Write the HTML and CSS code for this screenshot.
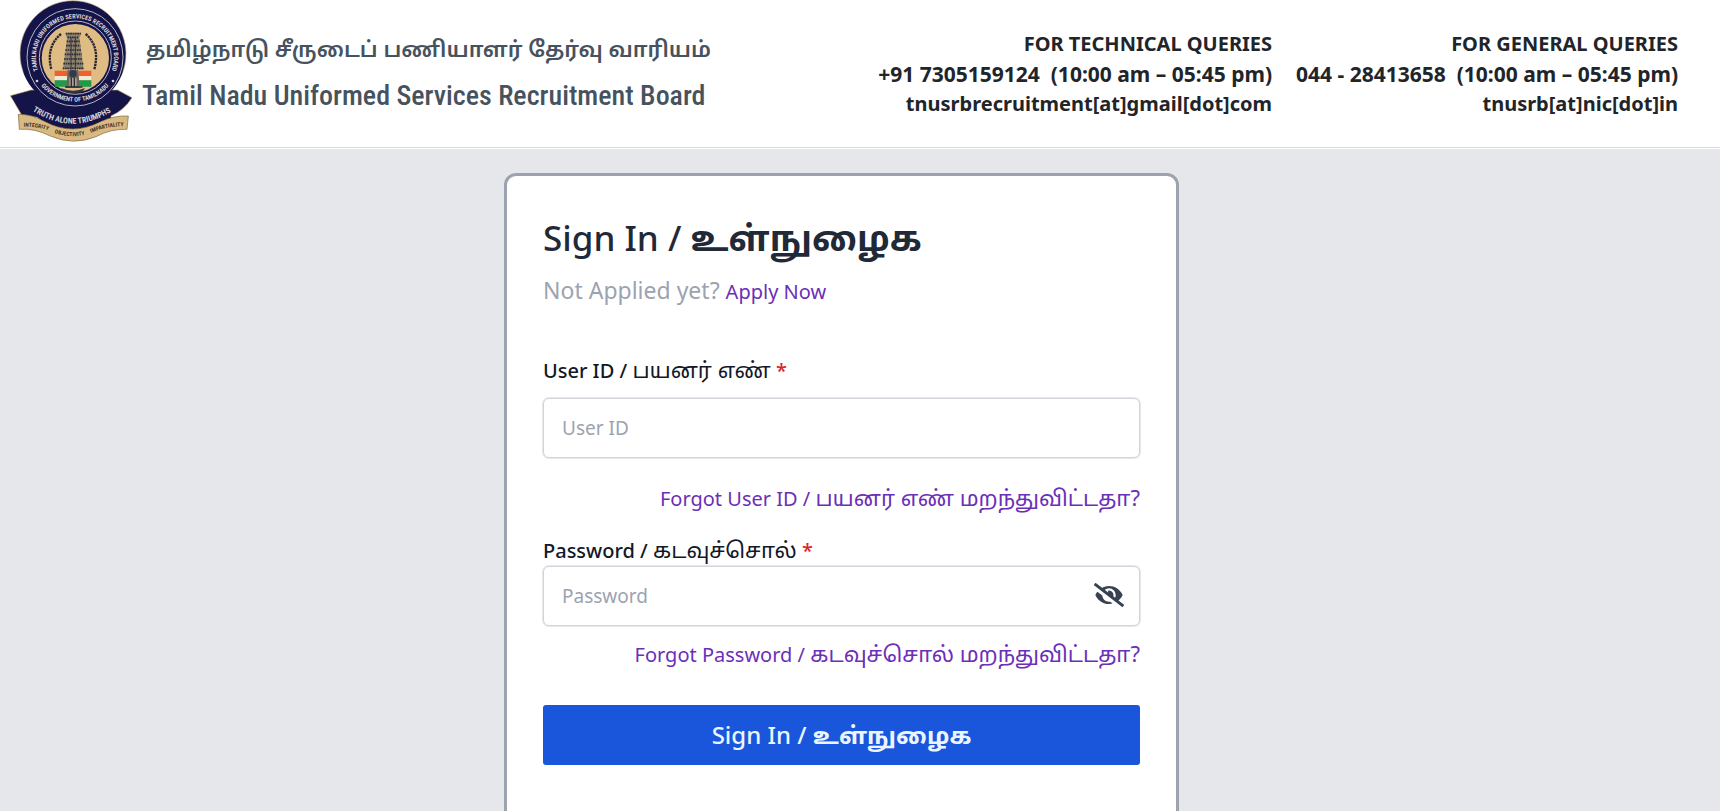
FILE: index.html
```html
<!DOCTYPE html>
<html lang="en">
<head>
  <meta charset="UTF-8" />
  <meta name="viewport" content="width=device-width, initial-scale=1.0"/>
  <title>Sign In | TNUSRB</title>
  <link rel="stylesheet" href="styles.css">
</head>
<body>
  <header>
    <div class="brand">
      <svg class="logo" viewBox="27 0 366 429" role="img" aria-label="TNUSRB emblem">
        <defs>
          <path id="ringTop" d="M222 289 A117 117 0 0 1 222 55 A117 117 0 0 1 222 289"/>
          <path id="ringBottom" d="M222 39 A133 133 0 0 0 222 305 A133 133 0 0 0 222 39"/>
          <path id="ribbonText" d="M60 306 Q212 434 366 310"/>
          <path id="scrollText" d="M56 381 Q110 376 160 399 Q217 418 270 399 Q320 376 380 379"/>
        </defs>
        <!-- dark ribbon -->
        <path d="M28 287 L90 270 L350 270 L393 293 Q370 330 330 348 L330 362 Q215 440 108 352 L62 345 Z" fill="#141449" stroke="#c9a764" stroke-width="2"/>
        <!-- scroll -->
        <path d="M52 343 Q90 342 130 364 Q215 410 300 364 Q340 346 382 348 L378 388 Q330 386 285 410 Q215 438 148 408 Q100 384 55 388 Z" fill="#d8b982" stroke="#7b653f" stroke-width="2"/>
        <path d="M106 330 L330 330 L316 356 Q215 408 118 356 Z" fill="#141449"/>
        <!-- seal -->
        <ellipse cx="216" cy="162" rx="159" ry="160" fill="#141449"/>
        <path d="M66 215 A159 160 0 1 1 366 215" fill="none" stroke="#c7b184" stroke-width="2"/>
        <ellipse cx="222" cy="172" rx="144" ry="146" fill="none" stroke="#b9b6c6" stroke-width="3"/>
        <ellipse cx="223" cy="173" rx="108" ry="110" fill="none" stroke="#b9b6c6" stroke-width="3"/>
        <ellipse cx="223" cy="174" rx="101" ry="102" fill="#dfbc83"/>
        <!-- wreaths -->
        <path d="M180 102 Q134 140 151 208" fill="none" stroke="#2b2532" stroke-width="7" stroke-dasharray="7 2"/>
        <path d="M254 102 Q298 140 280 208" fill="none" stroke="#2b2532" stroke-width="7" stroke-dasharray="7 2"/>
        <!-- temple tower -->
        <path d="M195 98h43v12h-3l13 98h-62l13-98h-4z" fill="#8d826b"/>
        <path d="M194 101h46M199 112h35M197 124h39M195 137h43M193 150h47M191 163h51M189 177h55M187 191h60M185 205h64" stroke="#2d2b36" stroke-width="5" stroke-dasharray="5 2"/>
        <path d="M210 112v100M223 112v100" stroke="#343142" stroke-width="3"/>
        <!-- flags -->
        <path d="M161 212h41v18h-41zM232 212h39v18h-39z" fill="#f0602e"/>
        <path d="M161 228h41v13h-41zM232 228h39v13h-39z" fill="#f2e8d7"/>
        <path d="M161 241h41v19h-41zM232 241h39v19h-39z" fill="#1f9a4b"/>
        <!-- lion capital -->
        <path d="M200 210h32l4 54h-40z" fill="#6b655e"/>
        <circle cx="216" cy="221" r="11" fill="#33384a"/>
        <path d="M205 234h22v24h-22z" fill="#aaa28a"/>
        <path d="M211 233v30M220 233v30M192 261h52" stroke="#272b3d" stroke-width="4"/>
        <path d="M180 264q36 16 72 0l-7 11q-29 10-58 0z" fill="#343243"/>
        <circle cx="108" cy="243" r="4" fill="#d5d2d5"/>
        <circle cx="336" cy="243" r="4" fill="#d5d2d5"/>
        <text class="seal-text"><textPath href="#ringTop" startOffset="50%">TAMILNADU UNIFORMED SERVICES RECRUITMENT BOARD</textPath></text>
        <text class="seal-text"><textPath href="#ringBottom" startOffset="50%">GOVERNMENT OF TAMILNADU</textPath></text>
        <text class="seal-text ribbon-text"><textPath href="#ribbonText" startOffset="50%">TRUTH ALONE TRIUMPHS</textPath></text>
        <text class="seal-text scroll-text"><textPath href="#scrollText" startOffset="50%">INTEGRITY &#160; &#160; OBJECTIVITY &#160; &#160; IMPARTIALITY</textPath></text>
      </svg>
      <div class="brand-name">
        <p class="brand-ta" lang="ta">தமிழ்நாடு சீருடைப் பணியாளர் தேர்வு வாரியம்</p>
        <p class="brand-en">Tamil Nadu Uniformed Services Recruitment Board</p>
      </div>
    </div>
    <div class="contacts">
      <div class="contact">
        <p>FOR TECHNICAL QUERIES</p>
        <p class="phone">+91 7305159124&nbsp; (10:00 am – 05:45 pm)</p>
        <p>tnusrbrecruitment[at]gmail[dot]com</p>
      </div>
      <div class="contact">
        <p>FOR GENERAL QUERIES</p>
        <p class="phone">044 - 28413658&nbsp; (10:00 am – 05:45 pm)</p>
        <p>tnusrb[at]nic[dot]in</p>
      </div>
    </div>
  </header>

  <main>
    <form class="card">
      <h1>Sign In / <span class="ta" lang="ta">உள்நுழைக</span></h1>
      <p class="apply">Not Applied yet? <a href="#">Apply Now</a></p>

      <label for="userId">User ID / <span class="ta" lang="ta">பயனர் எண்</span> <span class="required">*</span></label>
      <input class="user-input" type="text" id="userId" placeholder="User ID" required>
      <a class="forgot forgot-user" href="#">Forgot User ID / <span class="ta" lang="ta">பயனர் எண் மறந்துவிட்டதா?</span></a>

      <label for="password">Password / <span class="ta" lang="ta">கடவுச்சொல்</span> <span class="required">*</span></label>
      <div class="password-box">
        <input type="password" id="password" placeholder="Password" required>
        <button type="button" class="eye" aria-label="Show password">
          <svg viewBox="0 0 640 512"><path fill="currentColor" d="M320 400c-75.850 0-137.250-58.710-142.900-133.110L72.200 185.820c-13.790 17.300-26.480 35.590-36.720 55.590a32.350 32.350 0 0 0 0 29.190C89.710 376.410 197.070 448 320 448c26.910 0 52.870-4 77.890-10.460L346 397.390a144.130 144.130 0 0 1-26 2.610zm313.820 58.100l-110.550-85.440a331.250 331.250 0 0 0 81.250-102.070 32.350 32.350 0 0 0 0-29.190C550.290 135.590 442.930 64 320 64a308.150 308.150 0 0 0-147.320 37.700L45.460 3.370A16 16 0 0 0 23 6.180L3.370 31.450A16 16 0 0 0 6.180 53.900l588.360 454.730a16 16 0 0 0 22.460-2.810l19.640-25.270a16 16 0 0 0-2.820-22.450zM450.190 314.820l-39.300-30.380A94.750 94.750 0 0 0 416 256a94.760 94.760 0 0 0-121.310-92.210A47.650 47.650 0 0 1 304 192a46.640 46.640 0 0 1-1.540 10l-73.610-56.890A142.310 142.310 0 0 1 320 112a143.920 143.920 0 0 1 144 144c0 21.630-5.290 41.790-13.810 58.820z"/></svg>
        </button>
      </div>
      <a class="forgot forgot-password" href="#">Forgot Password / <span class="ta" lang="ta">கடவுச்சொல் மறந்துவிட்டதா?</span></a>

      <button type="submit" class="submit">Sign In / <span class="ta" lang="ta">உள்நுழைக</span></button>
    </form>
  </main>
</body>
</html>
```
FILE: styles.css
```css
* {
  box-sizing: border-box;
}

body {
  margin: 0;
  background: #e5e7eb;
  color: #212529;
  font-family: 'Segoe UI', 'Noto Sans', 'Noto Sans Tamil', sans-serif;
  font-size: 20px;
  line-height: 30px;
}

p {
  margin: 0;
}

header {
  display: flex;
  justify-content: space-between;
  align-items: flex-start;
  min-height: 148px;
  padding: 0 42px 0 10px;
  background: #fff;
  border-bottom: 1px solid #d9dcdf;
  box-shadow: 0 1px 0 #fff;
}

.brand {
  display: flex;
  align-items: flex-start;
  gap: 10px;
}

.logo {
  width: 122px;
  height: 143px;
  flex-shrink: 0;
}

.seal-text {
  fill: #d5d2d5;
  font: bold 19px 'Roboto Condensed', 'Liberation Sans Narrow', sans-serif;
  text-anchor: middle;
}

.ribbon-text {
  font-size: 24px;
}

.scroll-text {
  fill: #4a3323;
  font-size: 17px;
}

.brand-name {
  padding-top: 24px;
  color: #46535e;
  white-space: nowrap;
}

.brand-ta {
  padding-left: 4px;
  font-size: 22px;
  font-weight: 600;
  line-height: 48px;
}

.brand-en {
  font-family: 'Roboto Condensed', 'Liberation Sans Narrow', sans-serif;
  font-size: 28px;
  font-weight: 500;
  line-height: 48px;
}

.contacts {
  display: flex;
  gap: 24px;
  padding-top: 29px;
  font-weight: 700;
  text-align: right;
  white-space: nowrap;
}

.phone {
  font-size: 21px;
}

main {
  padding: 25px 53px 24px 16px;
}

.card {
  display: flex;
  flex-direction: column;
  max-width: 675px;
  min-height: 720px;
  margin: 0 auto;
  padding: 36px;
  background: #fff;
  border: 3px solid #9ca3af;
  border-radius: 12px;
}

a {
  color: #6b2fb8;
  text-decoration: none;
}

h1 {
  margin: 0;
  color: #1f2937;
  font-size: 35px;
  font-weight: 500;
  line-height: 52px;
}

h1 .ta,
.submit .ta {
  font-weight: 700;
}

.apply {
  margin: 8px 0 44px;
  color: #9ca3af;
  font-size: 23px;
  line-height: 36px;
}

.apply a {
  font-size: 20px;
}

label {
  color: #111827;
  font-weight: 500;
}

label .ta,
.forgot .ta {
  font-size: 22px;
  font-weight: 400;
}

.required {
  color: #e02424;
}

input {
  width: 100%;
  height: 60px;
  padding: 0 18px;
  background: #fff;
  border: 1px solid #d1d5db;
  border-radius: 6px;
  box-shadow: 0 0 1px 1px #e5e7eb;
  color: #111827;
  font-family: inherit;
  font-size: 19px;
}

input::placeholder {
  color: #9ca3af;
}

.user-input {
  margin-top: 12px;
}

.forgot {
  align-self: flex-end;
}

.forgot-user {
  margin: 24px 0 20px;
}

.forgot-password {
  margin: 12px 0 35px;
}

.password-box {
  position: relative;
}

.eye {
  position: absolute;
  top: 17px;
  right: 16px;
  padding: 0;
  background: none;
  border: none;
  color: #374151;
  cursor: pointer;
}

.eye svg {
  display: block;
  width: 30px;
  height: 24px;
}

.submit {
  height: 60px;
  background: #1a56db;
  border: none;
  border-radius: 3px;
  color: #ebf5ff;
  font-family: inherit;
  font-size: 24px;
  font-weight: 500;
  cursor: pointer;
}
```
